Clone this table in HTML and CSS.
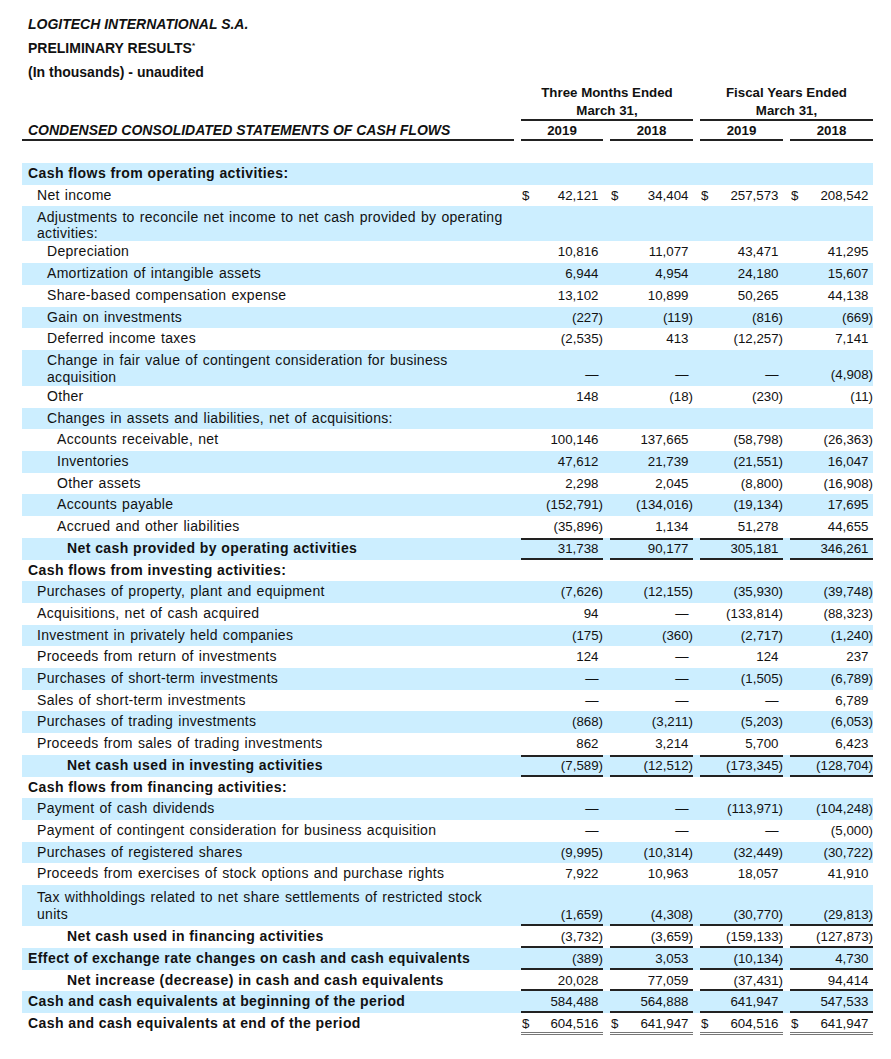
FILE: index.html
```html
<!DOCTYPE html>
<html lang="en">
<head>
<meta charset="utf-8">
<title>Logitech – Condensed Consolidated Statements of Cash Flows</title>
<link rel="stylesheet" href="styles.css">
</head>
<body>
<div class="page">
  <header class="doc-head">
    <p class="co">LOGITECH INTERNATIONAL S.A.</p>
    <p class="pr">PRELIMINARY RESULTS<sup>*</sup></p>
    <p class="un">(In thousands) - unaudited</p>
  </header>

  <div class="colhead">
    <div class="ttl"><span>CONDENSED CONSOLIDATED STATEMENTS OF CASH FLOWS</span></div>
    <div class="grp g1"><div class="gi"><span>Three Months Ended</span><span>March 31,</span></div></div>
    <div class="grp g2"><div class="gi"><span>Fiscal Years Ended</span><span>March 31,</span></div></div>
    <div class="yr c1"><span>2019</span></div>
    <div class="yr c2"><span>2018</span></div>
    <div class="yr c3"><span>2019</span></div>
    <div class="yr c4"><span>2018</span></div>
  </div>

  <div class="stmt">
    <div class="row"><div class="lb l0 b">Cash flows from operating activities:</div><div class="c"></div><div class="c"></div><div class="c"></div><div class="c"></div></div>
    <div class="row"><div class="lb l1">Net income</div><div class="c"><div class="v"><span class="d">$</span><span class="n">42,121</span></div></div><div class="c"><div class="v"><span class="d">$</span><span class="n">34,404</span></div></div><div class="c"><div class="v"><span class="d">$</span><span class="n">257,573</span></div></div><div class="c"><div class="v"><span class="d">$</span><span class="n">208,542</span></div></div></div>
    <div class="row"><div class="lb l1 w2">Adjustments to reconcile net income to net cash provided by operating activities:</div><div class="c"></div><div class="c"></div><div class="c"></div><div class="c"></div></div>
    <div class="row"><div class="lb l2">Depreciation</div><div class="c"><div class="v"><span class="n">10,816</span></div></div><div class="c"><div class="v"><span class="n">11,077</span></div></div><div class="c"><div class="v"><span class="n">43,471</span></div></div><div class="c"><div class="v"><span class="n">41,295</span></div></div></div>
    <div class="row"><div class="lb l2">Amortization of intangible assets</div><div class="c"><div class="v"><span class="n">6,944</span></div></div><div class="c"><div class="v"><span class="n">4,954</span></div></div><div class="c"><div class="v"><span class="n">24,180</span></div></div><div class="c"><div class="v"><span class="n">15,607</span></div></div></div>
    <div class="row"><div class="lb l2">Share-based compensation expense</div><div class="c"><div class="v"><span class="n">13,102</span></div></div><div class="c"><div class="v"><span class="n">10,899</span></div></div><div class="c"><div class="v"><span class="n">50,265</span></div></div><div class="c"><div class="v"><span class="n">44,138</span></div></div></div>
    <div class="row"><div class="lb l2">Gain on investments</div><div class="c"><div class="v"><span class="n ng">(227)</span></div></div><div class="c"><div class="v"><span class="n ng">(119)</span></div></div><div class="c"><div class="v"><span class="n ng">(816)</span></div></div><div class="c"><div class="v"><span class="n ng">(669)</span></div></div></div>
    <div class="row"><div class="lb l2">Deferred income taxes</div><div class="c"><div class="v"><span class="n ng">(2,535)</span></div></div><div class="c"><div class="v"><span class="n">413</span></div></div><div class="c"><div class="v"><span class="n ng">(12,257)</span></div></div><div class="c"><div class="v"><span class="n">7,141</span></div></div></div>
    <div class="row"><div class="lb l2 w">Change in fair value of contingent consideration for business acquisition</div><div class="c"><div class="v"><span class="n">—</span></div></div><div class="c"><div class="v"><span class="n">—</span></div></div><div class="c"><div class="v"><span class="n">—</span></div></div><div class="c"><div class="v"><span class="n ng">(4,908)</span></div></div></div>
    <div class="row"><div class="lb l2">Other</div><div class="c"><div class="v"><span class="n">148</span></div></div><div class="c"><div class="v"><span class="n ng">(18)</span></div></div><div class="c"><div class="v"><span class="n ng">(230)</span></div></div><div class="c"><div class="v"><span class="n ng">(11)</span></div></div></div>
    <div class="row"><div class="lb l2">Changes in assets and liabilities, net of acquisitions:</div><div class="c"></div><div class="c"></div><div class="c"></div><div class="c"></div></div>
    <div class="row"><div class="lb l3">Accounts receivable, net</div><div class="c"><div class="v"><span class="n">100,146</span></div></div><div class="c"><div class="v"><span class="n">137,665</span></div></div><div class="c"><div class="v"><span class="n ng">(58,798)</span></div></div><div class="c"><div class="v"><span class="n ng">(26,363)</span></div></div></div>
    <div class="row"><div class="lb l3">Inventories</div><div class="c"><div class="v"><span class="n">47,612</span></div></div><div class="c"><div class="v"><span class="n">21,739</span></div></div><div class="c"><div class="v"><span class="n ng">(21,551)</span></div></div><div class="c"><div class="v"><span class="n">16,047</span></div></div></div>
    <div class="row"><div class="lb l3">Other assets</div><div class="c"><div class="v"><span class="n">2,298</span></div></div><div class="c"><div class="v"><span class="n">2,045</span></div></div><div class="c"><div class="v"><span class="n ng">(8,800)</span></div></div><div class="c"><div class="v"><span class="n ng">(16,908)</span></div></div></div>
    <div class="row"><div class="lb l3">Accounts payable</div><div class="c"><div class="v"><span class="n ng">(152,791)</span></div></div><div class="c"><div class="v"><span class="n ng">(134,016)</span></div></div><div class="c"><div class="v"><span class="n ng">(19,134)</span></div></div><div class="c"><div class="v"><span class="n">17,695</span></div></div></div>
    <div class="row"><div class="lb l3">Accrued and other liabilities</div><div class="c"><div class="v"><span class="n ng">(35,896)</span></div></div><div class="c"><div class="v"><span class="n">1,134</span></div></div><div class="c"><div class="v"><span class="n">51,278</span></div></div><div class="c"><div class="v"><span class="n">44,655</span></div></div></div>
    <div class="row"><div class="lb l4 b">Net cash provided by operating activities</div><div class="c"><div class="v t bt"><span class="n">31,738</span></div></div><div class="c"><div class="v t bt"><span class="n">90,177</span></div></div><div class="c"><div class="v t bt"><span class="n">305,181</span></div></div><div class="c"><div class="v t bt"><span class="n">346,261</span></div></div></div>
    <div class="row"><div class="lb l0 b">Cash flows from investing activities:</div><div class="c"></div><div class="c"></div><div class="c"></div><div class="c"></div></div>
    <div class="row"><div class="lb l1">Purchases of property, plant and equipment</div><div class="c"><div class="v"><span class="n ng">(7,626)</span></div></div><div class="c"><div class="v"><span class="n ng">(12,155)</span></div></div><div class="c"><div class="v"><span class="n ng">(35,930)</span></div></div><div class="c"><div class="v"><span class="n ng">(39,748)</span></div></div></div>
    <div class="row"><div class="lb l1">Acquisitions, net of cash acquired</div><div class="c"><div class="v"><span class="n">94</span></div></div><div class="c"><div class="v"><span class="n">—</span></div></div><div class="c"><div class="v"><span class="n ng">(133,814)</span></div></div><div class="c"><div class="v"><span class="n ng">(88,323)</span></div></div></div>
    <div class="row"><div class="lb l1">Investment in privately held companies</div><div class="c"><div class="v"><span class="n ng">(175)</span></div></div><div class="c"><div class="v"><span class="n ng">(360)</span></div></div><div class="c"><div class="v"><span class="n ng">(2,717)</span></div></div><div class="c"><div class="v"><span class="n ng">(1,240)</span></div></div></div>
    <div class="row"><div class="lb l1">Proceeds from return of investments</div><div class="c"><div class="v"><span class="n">124</span></div></div><div class="c"><div class="v"><span class="n">—</span></div></div><div class="c"><div class="v"><span class="n">124</span></div></div><div class="c"><div class="v"><span class="n">237</span></div></div></div>
    <div class="row"><div class="lb l1">Purchases of short-term investments</div><div class="c"><div class="v"><span class="n">—</span></div></div><div class="c"><div class="v"><span class="n">—</span></div></div><div class="c"><div class="v"><span class="n ng">(1,505)</span></div></div><div class="c"><div class="v"><span class="n ng">(6,789)</span></div></div></div>
    <div class="row"><div class="lb l1">Sales of short-term investments</div><div class="c"><div class="v"><span class="n">—</span></div></div><div class="c"><div class="v"><span class="n">—</span></div></div><div class="c"><div class="v"><span class="n">—</span></div></div><div class="c"><div class="v"><span class="n">6,789</span></div></div></div>
    <div class="row"><div class="lb l1">Purchases of trading investments</div><div class="c"><div class="v"><span class="n ng">(868)</span></div></div><div class="c"><div class="v"><span class="n ng">(3,211)</span></div></div><div class="c"><div class="v"><span class="n ng">(5,203)</span></div></div><div class="c"><div class="v"><span class="n ng">(6,053)</span></div></div></div>
    <div class="row"><div class="lb l1">Proceeds from sales of trading investments</div><div class="c"><div class="v"><span class="n">862</span></div></div><div class="c"><div class="v"><span class="n">3,214</span></div></div><div class="c"><div class="v"><span class="n">5,700</span></div></div><div class="c"><div class="v"><span class="n">6,423</span></div></div></div>
    <div class="row"><div class="lb l4 b">Net cash used in investing activities</div><div class="c"><div class="v t bt"><span class="n ng">(7,589)</span></div></div><div class="c"><div class="v t bt"><span class="n ng">(12,512)</span></div></div><div class="c"><div class="v t bt"><span class="n ng">(173,345)</span></div></div><div class="c"><div class="v t bt"><span class="n ng">(128,704)</span></div></div></div>
    <div class="row"><div class="lb l0 b">Cash flows from financing activities:</div><div class="c"></div><div class="c"></div><div class="c"></div><div class="c"></div></div>
    <div class="row"><div class="lb l1">Payment of cash dividends</div><div class="c"><div class="v"><span class="n">—</span></div></div><div class="c"><div class="v"><span class="n">—</span></div></div><div class="c"><div class="v"><span class="n ng">(113,971)</span></div></div><div class="c"><div class="v"><span class="n ng">(104,248)</span></div></div></div>
    <div class="row"><div class="lb l1">Payment of contingent consideration for business acquisition</div><div class="c"><div class="v"><span class="n">—</span></div></div><div class="c"><div class="v"><span class="n">—</span></div></div><div class="c"><div class="v"><span class="n">—</span></div></div><div class="c"><div class="v"><span class="n ng">(5,000)</span></div></div></div>
    <div class="row"><div class="lb l1">Purchases of registered shares</div><div class="c"><div class="v"><span class="n ng">(9,995)</span></div></div><div class="c"><div class="v"><span class="n ng">(10,314)</span></div></div><div class="c"><div class="v"><span class="n ng">(32,449)</span></div></div><div class="c"><div class="v"><span class="n ng">(30,722)</span></div></div></div>
    <div class="row"><div class="lb l1">Proceeds from exercises of stock options and purchase rights</div><div class="c"><div class="v"><span class="n">7,922</span></div></div><div class="c"><div class="v"><span class="n">10,963</span></div></div><div class="c"><div class="v"><span class="n">18,057</span></div></div><div class="c"><div class="v"><span class="n">41,910</span></div></div></div>
    <div class="row"><div class="lb l1 w tall">Tax withholdings related to net share settlements of restricted stock units</div><div class="c"><div class="v bt"><span class="n ng">(1,659)</span></div></div><div class="c"><div class="v bt"><span class="n ng">(4,308)</span></div></div><div class="c"><div class="v bt"><span class="n ng">(30,770)</span></div></div><div class="c"><div class="v bt"><span class="n ng">(29,813)</span></div></div></div>
    <div class="row"><div class="lb l4 b">Net cash used in financing activities</div><div class="c"><div class="v bt"><span class="n ng">(3,732)</span></div></div><div class="c"><div class="v bt"><span class="n ng">(3,659)</span></div></div><div class="c"><div class="v bt"><span class="n ng">(159,133)</span></div></div><div class="c"><div class="v bt"><span class="n ng">(127,873)</span></div></div></div>
    <div class="row"><div class="lb l0 b">Effect of exchange rate changes on cash and cash equivalents</div><div class="c"><div class="v bt"><span class="n ng">(389)</span></div></div><div class="c"><div class="v bt"><span class="n">3,053</span></div></div><div class="c"><div class="v bt"><span class="n ng">(10,134)</span></div></div><div class="c"><div class="v bt"><span class="n">4,730</span></div></div></div>
    <div class="row"><div class="lb l4 b">Net increase (decrease) in cash and cash equivalents</div><div class="c"><div class="v bt"><span class="n">20,028</span></div></div><div class="c"><div class="v bt"><span class="n">77,059</span></div></div><div class="c"><div class="v bt"><span class="n ng">(37,431)</span></div></div><div class="c"><div class="v bt"><span class="n">94,414</span></div></div></div>
    <div class="row"><div class="lb l0 b">Cash and cash equivalents at beginning of the period</div><div class="c"><div class="v bt"><span class="n">584,488</span></div></div><div class="c"><div class="v bt"><span class="n">564,888</span></div></div><div class="c"><div class="v bt"><span class="n">641,947</span></div></div><div class="c"><div class="v bt"><span class="n">547,533</span></div></div></div>
    <div class="row"><div class="lb l0 b">Cash and cash equivalents at end of the period</div><div class="c"><div class="v dbl"><span class="d">$</span><span class="n">604,516</span></div></div><div class="c"><div class="v dbl"><span class="d">$</span><span class="n">641,947</span></div></div><div class="c"><div class="v dbl"><span class="d">$</span><span class="n">604,516</span></div></div><div class="c"><div class="v dbl"><span class="d">$</span><span class="n">641,947</span></div></div></div>
  </div>
</div>
</body>
</html>
```

FILE: styles.css
```css
* { box-sizing: border-box; }

html, body {
  margin: 0;
  padding: 0;
  background: #ffffff;
}

body {
  font-family: "Liberation Sans", Arial, sans-serif;
  color: #111111;
}

.page {
  width: 851px;
  margin-left: 22px;
}

/* ---------- document header ---------- */
.doc-head {
  padding-top: 12px;
  padding-left: 6px;
}

.doc-head p {
  margin: 0;
  font-size: 14px;
  line-height: 24px;
  font-weight: bold;
}

.doc-head .co { font-style: italic; }

.doc-head sup {
  font-size: 8px;
  vertical-align: 5px;
  line-height: 0;
}

/* ---------- column headings ---------- */
.colhead {
  display: grid;
  grid-template-columns: 492px 89px 90px 90px 90px;
  grid-template-rows: auto auto;
  font-size: 13.3px;
  font-weight: bold;
}

.ttl {
  grid-column: 1;
  grid-row: 1 / span 2;
  display: flex;
  align-items: flex-end;
}

.ttl span {
  display: block;
  width: 100%;
  padding-left: 6px;
  font-size: 14px;
  font-style: italic;
  line-height: 17px;
  border-bottom: 2px solid #222;
}

.grp { padding-left: 7px; }
.g1 { grid-column: 2 / span 2; grid-row: 1; }
.g2 { grid-column: 4 / span 2; grid-row: 1; }

.gi {
  display: flex;
  flex-direction: column;
  align-items: center;
  line-height: 17.5px;
  border-bottom: 2px solid #222;
}

.yr {
  grid-row: 2;
  padding-left: 7px;
}

.yr span {
  display: block;
  text-align: center;
  line-height: 17px;
  padding-top: 1px;
  border-bottom: 2px solid #222;
}

.c1 { grid-column: 2; }
.c2 { grid-column: 3; }
.c3 { grid-column: 4; }
.c4 { grid-column: 5; }

/* ---------- statement rows ---------- */
.stmt {
  margin-top: 22px;
}

.row {
  display: grid;
  grid-template-columns: 492px 89px 90px 90px 90px;
  align-items: stretch;
}

.row:nth-child(odd) { background: #cceeff; }

.lb {
  font-size: 14px;
  letter-spacing: 0.3px;
  word-spacing: 0.9px;
  line-height: 15.7px;
  padding: 3px 8px 3px 0;
}

.lb.b {
  font-weight: bold;
  letter-spacing: 0.42px;
  word-spacing: 0;
}

.lb.w2 { line-height: 16px; padding-top: 3px; padding-bottom: 0; }
.lb.w { line-height: 17px; padding-top: 2px; padding-bottom: 0; }
.lb.tall { padding-top: 4px; padding-bottom: 3px; }

.l0 { padding-left: 6px; }
.l1 { padding-left: 15px; }
.l2 { padding-left: 25px; }
.l3 { padding-left: 35px; }
.l4 { padding-left: 45px; }

.c {
  padding-left: 7px;
  display: flex;
}

.v {
  flex: 1;
  display: flex;
  align-items: flex-end;
  font-size: 13.3px;
  line-height: 15.7px;
  padding: 3px 0 3px;
}

.v.t { border-top: 2px solid #222; padding-top: 1px; }
.v.bt { border-bottom: 2px solid #222; padding-bottom: 1px; }
.v.dbl { border-bottom: 3px double #777; padding-bottom: 0; }

.d { padding-left: 1px; }

.n {
  margin-left: auto;
  padding-right: 4.5px;
  white-space: nowrap;
}

.n.ng { padding-right: 0; }
```
